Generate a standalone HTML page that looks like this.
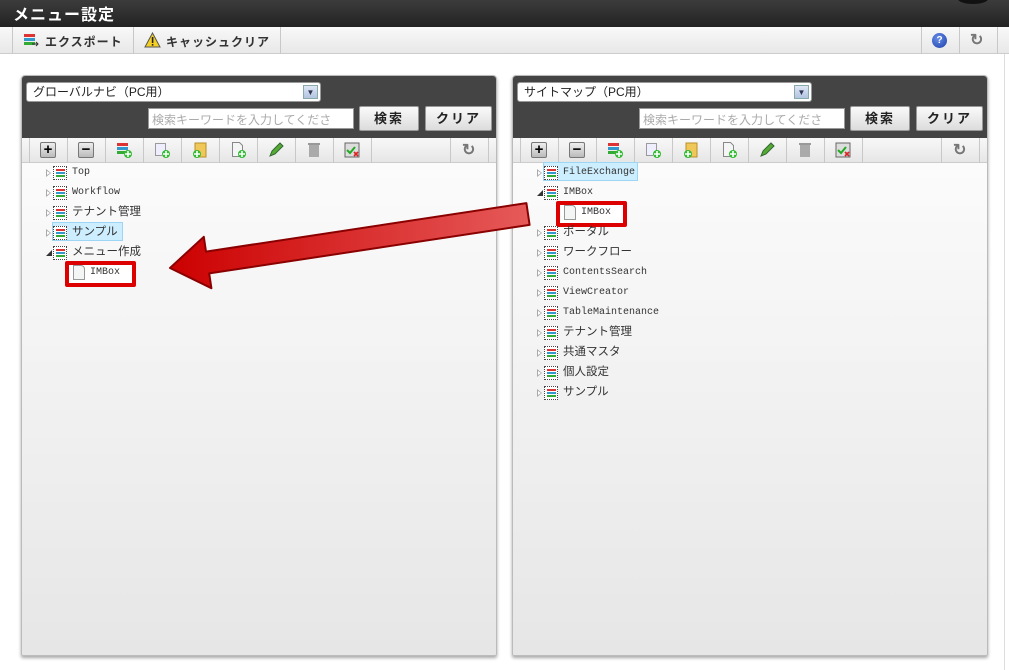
<!DOCTYPE html>
<html><head><meta charset="utf-8"><style>
*{box-sizing:border-box;margin:0;padding:0}
body{width:1009px;height:670px;background:#fff;font-family:"Liberation Sans","Noto Sans CJK JP",sans-serif;position:relative;overflow:hidden}
.abs{position:absolute}
#title{left:0;top:0;width:1009px;height:27px;background:linear-gradient(#3c3c3c,#222);color:#fff;font-weight:bold;font-size:16px;padding:1px 0 0 13px;letter-spacing:1px}
#tb{left:0;top:27px;width:1009px;height:27px;background:linear-gradient(#f8f8f8,#e8e8e8);border-bottom:1px solid #ccc}
.sep{position:absolute;top:0;width:1px;background:#c8c8c8}
.tbt{position:absolute;top:6px;font-size:12px;font-weight:bold;color:#333;letter-spacing:1px}
.panel{position:absolute;top:75px;width:476px;height:581px;border-radius:4px 4px 2px 2px;background:linear-gradient(#fff,#e6e6e6);box-shadow:0 2px 3px rgba(0,0,0,.35);border:1px solid #bbb;overflow:hidden}
.hdr{position:absolute;left:0;top:0;width:100%;height:62px;background:#444}
.sel{position:absolute;left:4px;top:6px;width:295px;height:20px;background:#fff;border:1px solid #999;border-radius:3px;font-size:12px;padding:0 6px;line-height:18px;color:#222}
.dd{position:absolute;right:2px;top:2px;width:15px;height:14px;background:linear-gradient(#dde6f5,#b3c4e0);border:1px solid #8aa;font-size:8px;text-align:center;color:#335;line-height:13px}
.inp{position:absolute;left:126px;top:32px;width:206px;height:21px;background:#fff;border:1px solid #999;font-size:12px;color:#aaa;padding:2px 3px;white-space:nowrap;overflow:hidden}
.btn{position:absolute;top:30px;height:25px;background:linear-gradient(#fafafa,#dcdcdc);border:1px solid #999;border-radius:2px;font-size:13px;font-weight:bold;text-align:center;line-height:23px;color:#222;letter-spacing:2px}
.ptb{position:absolute;left:0;top:62px;width:100%;height:25px;background:linear-gradient(#f8f8f8,#e6e6e6);border-bottom:1px solid #ccc}
.ic{position:absolute;top:4px;width:16px;height:16px}
.row{position:absolute;height:18px;font-family:"Liberation Mono","Noto Sans CJK JP",monospace;font-size:10px;color:#333;line-height:18px;white-space:nowrap}
.row .tg{position:absolute;left:0;top:5px;width:0;height:0;border-left:5px solid #aaa;border-top:4px solid transparent;border-bottom:4px solid transparent}
.row .tg:after{content:"";position:absolute;left:-4px;top:-2px;border-left:3px solid #fff;border-top:2px solid transparent;border-bottom:2px solid transparent}
.row .op{position:absolute;left:0;top:6px;width:0;height:0;border-right:6px solid #333;border-top:6px solid transparent}
.row .mi{position:absolute;left:7px;top:2px;width:14px;height:14px;border:1px dotted #444;background:
linear-gradient(#d33,#d33) 2px 2px/9px 2px no-repeat,linear-gradient(#39c,#39c) 2px 5px/9px 2px no-repeat,linear-gradient(#3a3,#3a3) 2px 8px/9px 2px no-repeat,#fff}
.row .t{position:absolute;left:26px}
.row .j{font-size:11.5px}
.hl{background:#cdeefe;border:1px solid #9dd6f5}
.doc{position:absolute;left:5px;top:1px;width:12px;height:15px;background:#f4f6f6;border:1px solid #999;border-radius:0 4px 0 0}
.box{position:absolute;border:4px solid #d00;border-radius:2px;background:#fff}
.rf{position:absolute;font-size:16px;font-weight:bold;color:#777}
</style></head><body>
<div id="title" class="abs">メニュー設定</div>
<div class="abs" style="left:958px;top:-6px;width:30px;height:10px;border-radius:50%;background:#111"></div>
<div id="tb" class="abs">
<div class="sep" style="left:12px;height:27px"></div>
<div class="sep" style="left:133px;height:27px"></div>
<div class="sep" style="left:280px;height:27px"></div>
<div class="sep" style="left:921px;height:27px"></div>
<div class="sep" style="left:959px;height:27px"></div>
<div class="sep" style="left:997px;height:27px"></div>
<svg class="abs" style="left:23px;top:6px" width="16" height="15"><rect x="1" y="1" width="11" height="3" fill="#d33"/><rect x="1" y="5" width="11" height="3" fill="#39c"/><rect x="1" y="9" width="11" height="3" fill="#3a3"/><path d="M9 11h6M13 9l2 2-2 2" stroke="#333" fill="none"/></svg>
<div class="tbt" style="left:45px">エクスポート</div>
<svg class="abs" style="left:144px;top:5px" width="17" height="16"><path d="M8.5 1L16 15H1z" fill="#f5d020" stroke="#555"/><rect x="7.8" y="5" width="1.6" height="6" fill="#222"/><rect x="7.8" y="12" width="1.6" height="1.6" fill="#222"/></svg>
<div class="tbt" style="left:166px">キャッシュクリア</div>
<div class="abs" style="left:932px;top:6px;width:15px;height:15px;border-radius:50%;background:radial-gradient(circle at 40% 35%,#6a8ee8,#1a3ea8);color:#fff;font-size:10px;font-weight:bold;text-align:center;line-height:15px">?</div>
<div class="rf" style="left:970px;top:3px">↻</div>
</div>
<div class="abs" style="left:1004px;top:54px;width:1px;height:616px;background:#ddd"></div>

<!-- LEFT PANEL -->
<div class="panel" style="left:21px">
<div class="hdr">
<div class="sel">グローバルナビ（PC用）<div class="dd">▼</div></div>
<div class="inp">検索キーワードを入力してくださ</div>
<div class="btn" style="left:337px;width:60px">検索</div>
<div class="btn" style="left:403px;width:67px">クリア</div>
</div>
<div class="ptb">
<div class="sep" style="left:7px;height:25px"></div><div class="sep" style="left:45px;height:25px"></div><div class="sep" style="left:83px;height:25px"></div><div class="sep" style="left:121px;height:25px"></div><div class="sep" style="left:159px;height:25px"></div><div class="sep" style="left:197px;height:25px"></div><div class="sep" style="left:235px;height:25px"></div><div class="sep" style="left:273px;height:25px"></div><div class="sep" style="left:311px;height:25px"></div><div class="sep" style="left:349px;height:25px"></div><div class="sep" style="left:428px;height:25px"></div><div class="sep" style="left:466px;height:25px"></div>
<div class="ic" style="left:18px;background:linear-gradient(#eee,#bbb);border:1px solid #777;border-radius:2px;font-weight:bold;font-size:15px;line-height:13px;text-align:center">+</div>
<div class="ic" style="left:56px;background:linear-gradient(#eee,#bbb);border:1px solid #777;border-radius:2px;font-weight:bold;font-size:15px;line-height:13px;text-align:center">−</div>
<svg class="ic" style="left:94px"><rect x="1" y="1" width="11" height="3" fill="#d33"/><rect x="1" y="5" width="11" height="3" fill="#39c"/><rect x="1" y="9" width="11" height="3" fill="#3a3"/><circle cx="12" cy="12" r="4" fill="#3b3"/><path d="M12 9v6M9 12h6" stroke="#fff" stroke-width="1.6"/></svg>
<svg class="ic" style="left:132px"><rect x="1.5" y="1.5" width="10" height="12" fill="#eef" stroke="#444" stroke-dasharray="1 1"/><circle cx="12" cy="12" r="4" fill="#3b3"/><path d="M12 9v6M9 12h6" stroke="#fff" stroke-width="1.6"/></svg>
<svg class="ic" style="left:170px"><rect x="3" y="1" width="11" height="14" fill="#f0c85a" stroke="#b8902a"/><circle cx="5" cy="12" r="4" fill="#3b3"/><path d="M5 9v6M2 12h6" stroke="#fff" stroke-width="1.6"/></svg>
<svg class="ic" style="left:208px"><path d="M2.5 .5h7l3 3v11h-10z" fill="#f4f6f6" stroke="#888"/><circle cx="12" cy="12" r="4" fill="#3b3"/><path d="M12 9v6M9 12h6" stroke="#fff" stroke-width="1.6"/></svg>
<svg class="ic" style="left:246px"><path d="M2 14l2-5 8-8 3 3-8 8z" fill="#5a3" stroke="#363"/></svg>
<svg class="ic" style="left:284px"><rect x="3" y="3" width="10" height="12" fill="#aaa"/><rect x="2" y="1" width="12" height="2" fill="#999"/></svg>
<svg class="ic" style="left:322px"><rect x="1" y="1" width="14" height="14" fill="#ddd" stroke="#666"/><path d="M3 8l3 3 5-6" stroke="#2a2" stroke-width="2" fill="none"/><path d="M10 10l4 4M14 10l-4 4" stroke="#d22" stroke-width="1.6"/></svg>
<div class="rf" style="left:440px;top:2px">↻</div>
</div>
<div class="row" style="left:24px;top:88px"><span class="tg"></span><span class="mi"></span><span class="t">Top</span></div>
<div class="row" style="left:24px;top:108px"><span class="tg"></span><span class="mi"></span><span class="t">Workflow</span></div>
<div class="row" style="left:24px;top:128px"><span class="tg"></span><span class="mi"></span><span class="t j">テナント管理</span></div>
<div class="hl abs" style="left:30px;top:146px;width:71px;height:19px"></div>
<div class="row" style="left:24px;top:148px"><span class="tg"></span><span class="mi"></span><span class="t j">サンプル</span></div>
<div class="row" style="left:24px;top:168px"><span class="op"></span><span class="mi"></span><span class="t j">メニュー作成</span></div>
<div class="box" style="left:43px;top:185px;width:71px;height:26px"></div>
<div class="row" style="left:46px;top:188px"><span class="doc"></span><span class="t" style="left:22px">IMBox</span></div>
</div>

<!-- RIGHT PANEL -->
<div class="panel" style="left:512px">
<div class="hdr">
<div class="sel">サイトマップ（PC用）<div class="dd">▼</div></div>
<div class="inp">検索キーワードを入力してくださ</div>
<div class="btn" style="left:337px;width:60px">検索</div>
<div class="btn" style="left:403px;width:67px">クリア</div>
</div>
<div class="ptb">
<div class="sep" style="left:7px;height:25px"></div><div class="sep" style="left:45px;height:25px"></div><div class="sep" style="left:83px;height:25px"></div><div class="sep" style="left:121px;height:25px"></div><div class="sep" style="left:159px;height:25px"></div><div class="sep" style="left:197px;height:25px"></div><div class="sep" style="left:235px;height:25px"></div><div class="sep" style="left:273px;height:25px"></div><div class="sep" style="left:311px;height:25px"></div><div class="sep" style="left:349px;height:25px"></div><div class="sep" style="left:428px;height:25px"></div><div class="sep" style="left:466px;height:25px"></div>
<div class="ic" style="left:18px;background:linear-gradient(#eee,#bbb);border:1px solid #777;border-radius:2px;font-weight:bold;font-size:15px;line-height:13px;text-align:center">+</div>
<div class="ic" style="left:56px;background:linear-gradient(#eee,#bbb);border:1px solid #777;border-radius:2px;font-weight:bold;font-size:15px;line-height:13px;text-align:center">−</div>
<svg class="ic" style="left:94px"><rect x="1" y="1" width="11" height="3" fill="#d33"/><rect x="1" y="5" width="11" height="3" fill="#39c"/><rect x="1" y="9" width="11" height="3" fill="#3a3"/><circle cx="12" cy="12" r="4" fill="#3b3"/><path d="M12 9v6M9 12h6" stroke="#fff" stroke-width="1.6"/></svg>
<svg class="ic" style="left:132px"><rect x="1.5" y="1.5" width="10" height="12" fill="#eef" stroke="#444" stroke-dasharray="1 1"/><circle cx="12" cy="12" r="4" fill="#3b3"/><path d="M12 9v6M9 12h6" stroke="#fff" stroke-width="1.6"/></svg>
<svg class="ic" style="left:170px"><rect x="3" y="1" width="11" height="14" fill="#f0c85a" stroke="#b8902a"/><circle cx="5" cy="12" r="4" fill="#3b3"/><path d="M5 9v6M2 12h6" stroke="#fff" stroke-width="1.6"/></svg>
<svg class="ic" style="left:208px"><path d="M2.5 .5h7l3 3v11h-10z" fill="#f4f6f6" stroke="#888"/><circle cx="12" cy="12" r="4" fill="#3b3"/><path d="M12 9v6M9 12h6" stroke="#fff" stroke-width="1.6"/></svg>
<svg class="ic" style="left:246px"><path d="M2 14l2-5 8-8 3 3-8 8z" fill="#5a3" stroke="#363"/></svg>
<svg class="ic" style="left:284px"><rect x="3" y="3" width="10" height="12" fill="#aaa"/><rect x="2" y="1" width="12" height="2" fill="#999"/></svg>
<svg class="ic" style="left:322px"><rect x="1" y="1" width="14" height="14" fill="#ddd" stroke="#666"/><path d="M3 8l3 3 5-6" stroke="#2a2" stroke-width="2" fill="none"/><path d="M10 10l4 4M14 10l-4 4" stroke="#d22" stroke-width="1.6"/></svg>
<div class="rf" style="left:440px;top:2px">↻</div>
</div>
<div class="hl abs" style="left:30px;top:86px;width:95px;height:19px"></div>
<div class="row" style="left:24px;top:88px"><span class="tg"></span><span class="mi"></span><span class="t">FileExchange</span></div>
<div class="row" style="left:24px;top:108px"><span class="op"></span><span class="mi"></span><span class="t">IMBox</span></div>
<div class="box" style="left:43px;top:125px;width:71px;height:26px"></div>
<div class="row" style="left:46px;top:128px"><span class="doc"></span><span class="t" style="left:22px">IMBox</span></div>
<div class="row" style="left:24px;top:148px"><span class="tg"></span><span class="mi"></span><span class="t j">ポータル</span></div>
<div class="row" style="left:24px;top:168px"><span class="tg"></span><span class="mi"></span><span class="t j">ワークフロー</span></div>
<div class="row" style="left:24px;top:188px"><span class="tg"></span><span class="mi"></span><span class="t">ContentsSearch</span></div>
<div class="row" style="left:24px;top:208px"><span class="tg"></span><span class="mi"></span><span class="t">ViewCreator</span></div>
<div class="row" style="left:24px;top:228px"><span class="tg"></span><span class="mi"></span><span class="t">TableMaintenance</span></div>
<div class="row" style="left:24px;top:248px"><span class="tg"></span><span class="mi"></span><span class="t j">テナント管理</span></div>
<div class="row" style="left:24px;top:268px"><span class="tg"></span><span class="mi"></span><span class="t j">共通マスタ</span></div>
<div class="row" style="left:24px;top:288px"><span class="tg"></span><span class="mi"></span><span class="t j">個人設定</span></div>
<div class="row" style="left:24px;top:308px"><span class="tg"></span><span class="mi"></span><span class="t j">サンプル</span></div>
</div>

<svg class="abs" style="left:0;top:0" width="1009" height="670">
<defs><linearGradient id="g" x1="0" y1="0" x2="1" y2="0"><stop offset="0" stop-color="#c00"/><stop offset="1" stop-color="#e65a5a"/></linearGradient></defs>
<polygon points="526.4,203.1 206,251.6 203.8,236.8 170,268 211.4,288.2 209.2,273.4 529.6,224.9" fill="url(#g)" stroke="#8a0000" stroke-width="2" stroke-linejoin="round"/>
</svg>
</body></html>
